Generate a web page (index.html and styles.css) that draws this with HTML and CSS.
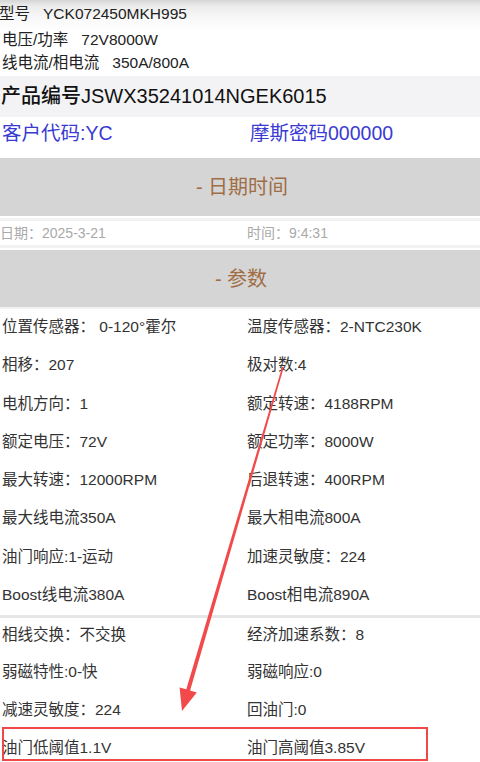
FILE: index.html
```html
<!DOCTYPE html>
<html lang="zh">
<head>
<meta charset="utf-8">
<link rel="stylesheet" href="styles.css">
</head>
<body>
<div class="page">
  <div class="info">
    <div class="info-row r1">型号<span class="val">YCK072450MKH995</span></div>
    <div class="info-row r2">电压/功率<span class="val">72V8000W</span></div>
    <div class="info-row r3">线电流/相电流<span class="val">350A/800A</span></div>
  </div>
  <div class="product">产品编号JSWX35241014NGEK6015</div>
  <div class="customer">
    <div>客户代码:YC</div>
    <div class="cust-right">摩斯密码000000</div>
  </div>
  <div class="band band-date">- 日期时间</div>
  <div class="date-row">
    <div>日期：2025-3-21</div>
    <div>时间：9:4:31</div>
  </div>
  <div class="band band-param">- 参数</div>
  <div class="params">
    <div class="prow"><div>位置传感器：&nbsp;0-120°霍尔</div><div>温度传感器：2-NTC230K</div></div>
    <div class="prow"><div>相移：207</div><div>极对数:4</div></div>
    <div class="prow"><div>电机方向：1</div><div>额定转速：4188RPM</div></div>
    <div class="prow"><div>额定电压：72V</div><div>额定功率：8000W</div></div>
    <div class="prow"><div>最大转速：12000RPM</div><div>后退转速：400RPM</div></div>
    <div class="prow"><div>最大线电流350A</div><div>最大相电流800A</div></div>
    <div class="prow"><div>油门响应:1-运动</div><div>加速灵敏度：224</div></div>
    <div class="prow"><div>Boost线电流380A</div><div>Boost相电流890A</div></div>
    <div class="prow sep"><div>相线交换：不交换</div><div>经济加速系数：8</div></div>
    <div class="prow"><div>弱磁特性:0-快</div><div>弱磁响应:0</div></div>
    <div class="prow"><div>减速灵敏度：224</div><div>回油门:0</div></div>
    <div class="prow"><div>油门低阈值1.1V</div><div>油门高阈值3.85V</div></div>
  </div>
  <div class="redbox"></div>
  <svg class="arrow" width="480" height="762" viewBox="0 0 480 762">
    <polygon fill="#f24a4a" points="283.8,367.2 190.1,690.5 196.8,692.4 182,711 179.6,687.4 186.3,689.3 282.2,366.8"/>
  </svg>
</div>
</body>
</html>
```
FILE: styles.css
```css
html, body {
  margin: 0;
  padding: 0;
  background: #fff;
}
.page {
  position: relative;
  width: 480px;
  height: 762px;
  overflow: hidden;
  font-family: "Liberation Sans", "Noto Sans CJK SC", sans-serif;
}
.info {
  background: linear-gradient(#d6d6d6 0, #ececec 6px, #f8f8f8 18px, #fff 32px);
  padding-bottom: 1px;
}
.info-row {
  font-size: 15.5px;
  color: #222;
  padding-left: 2px;
  white-space: nowrap;
}
.info-row .val {
  margin-left: 13px;
}
.r1 { height: 27px; line-height: 27px; margin-left: -3px; }
.r2 { height: 25px; line-height: 26px; }
.r3 { height: 23px; line-height: 22px; }
.product {
  height: 41px;
  line-height: 41px;
  background: #f3f3f5;
  font-size: 20px;
  font-weight: 500;
  color: #111;
  padding-left: 1px;
  white-space: nowrap;
}
.customer {
  display: grid;
  grid-template-columns: 248px 1fr;
  height: 33px;
  line-height: 32px;
  font-size: 19.5px;
  color: #3a3ad2;
  padding-left: 2px;
  margin-bottom: 8px;
}
.band {
  background: #d5d5d5;
  color: #a06d45;
  font-size: 20px;
  text-align: center;
}
.band-date {
  height: 58px;
  line-height: 58px;
  padding-left: 4px;
}
.band-param {
  height: 57px;
  line-height: 58px;
  padding-left: 2px;
}
.date-row {
  display: grid;
  grid-template-columns: 247px 1fr;
  height: 24px;
  line-height: 24px;
  font-size: 14px;
  color: #a9a9a9;
  border-top: 3px solid #f2f2f2;
  border-bottom: 3px solid #f2f2f2;
  margin: 2px 0 2px;
  background: #fff;
}
.params {
  border-top: 2px solid #f0f0f0;
}
.prow {
  display: grid;
  grid-template-columns: 245px 1fr;
  height: 38.3px;
  line-height: 36px;
  font-size: 15.5px;
  color: #333;
  padding-left: 2px;
  box-sizing: border-box;
  white-space: nowrap;
}
.prow.sep {
  border-top: 3px solid #e6e6e6;
  line-height: 33px;
}
.redbox {
  position: absolute;
  left: 2px;
  top: 727px;
  width: 422px;
  height: 30px;
  border: 2.5px solid #f04848;
}
.arrow {
  position: absolute;
  left: 0;
  top: 0;
  pointer-events: none;
}
```
